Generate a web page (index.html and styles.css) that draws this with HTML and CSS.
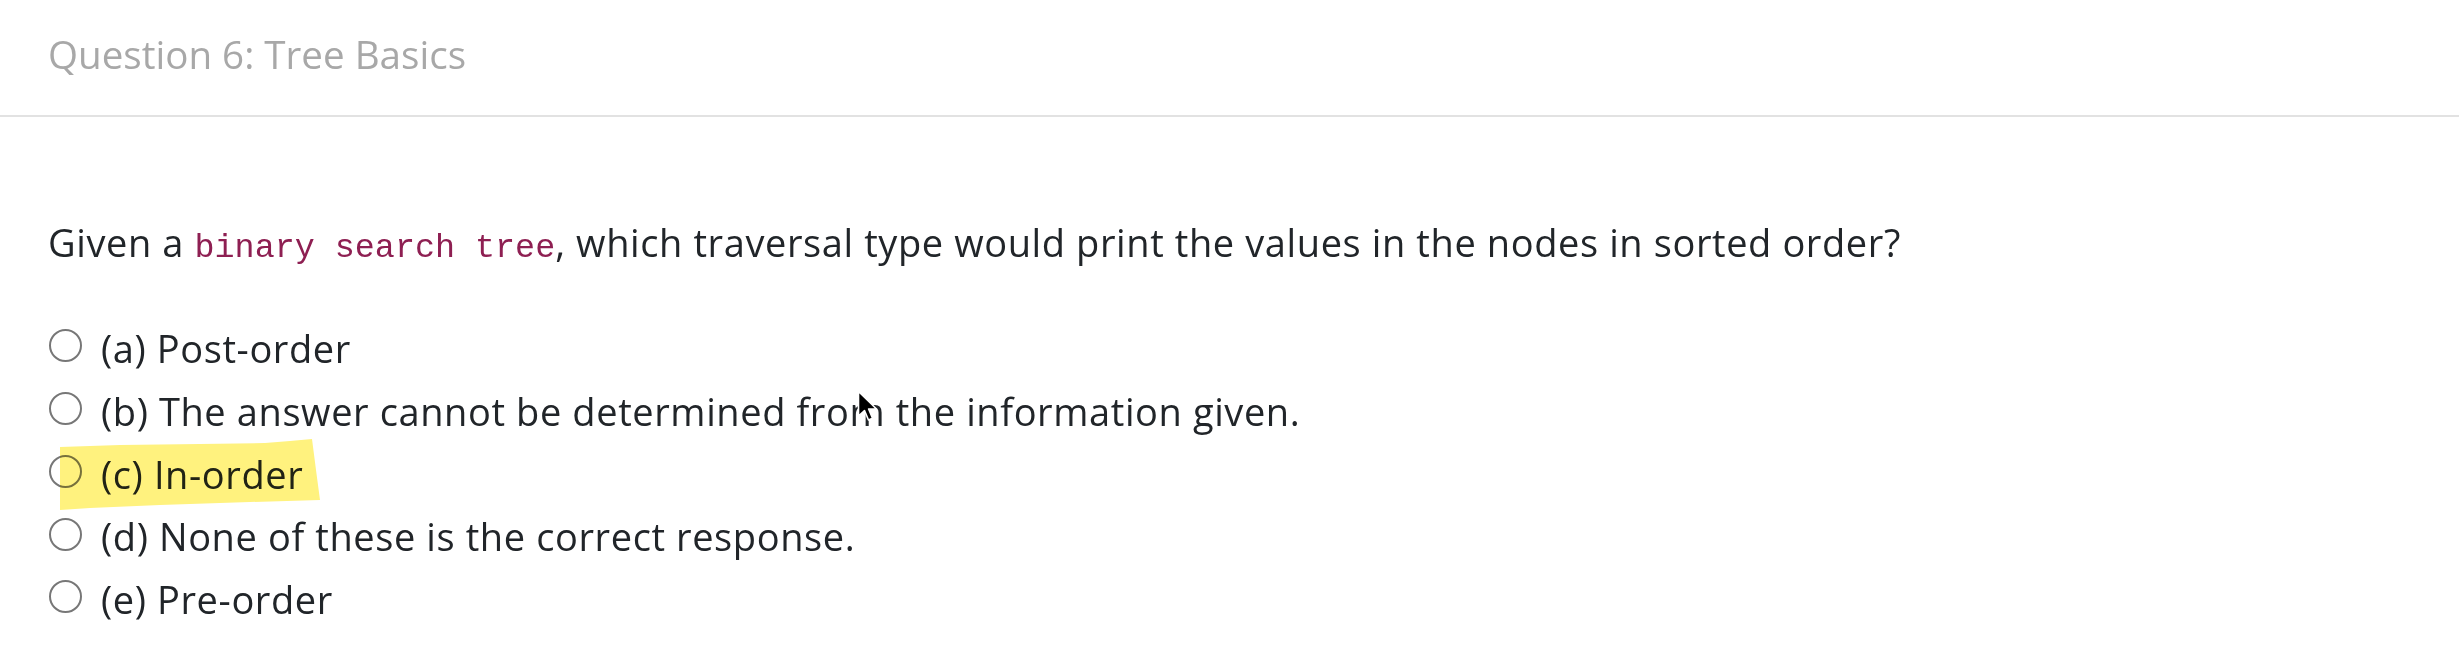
FILE: index.html
```html
<!DOCTYPE html>
<html>
<head>
<meta charset="utf-8">
<link rel="stylesheet" href="styles.css">
</head>
<body>
<div class="page">
  <div class="header">Question 6: Tree Basics</div>
  <div class="content">
    <p class="question">Given a <code>binary search tree</code>, which traversal type would print the values in the nodes in sorted order?</p>
    <div class="options">
      <label class="option"><span class="radio"></span><span class="label">(a) Post-order</span></label>
      <label class="option"><span class="radio"></span><span class="label">(b) The answer cannot be determined from the information given.</span></label>
      <label class="option"><span class="radio"></span><span class="label">(c) In-order</span></label>
      <label class="option"><span class="radio"></span><span class="label">(d) None of these is the correct response.</span></label>
      <label class="option"><span class="radio"></span><span class="label">(e) Pre-order</span></label>
    </div>
  </div>
  <svg class="highlight" width="2459" height="664" viewBox="0 0 2459 664">
    <path d="M60 447 L120 445 L200 444 L265 443 L290 441 L312 439 L316 470 L320 500 L250 502 L160 505 L90 508 L60 510 Z" fill="#fff27e"/>
  </svg>
  <svg class="cursor" width="24" height="34" viewBox="0 0 24 34">
    <path d="M1.5 1.5 L1.5 26 L7.5 20.5 L11.5 30 L15.5 28.3 L11.6 19 L19.5 19 Z" fill="#000" stroke="#fff" stroke-width="1.6" stroke-linejoin="round"/>
  </svg>
</div>
</body>
</html>
```
FILE: styles.css
```css
html, body {
  margin: 0;
  padding: 0;
  background: #fff;
}
.page {
  position: relative;
  width: 2459px;
  height: 664px;
  overflow: hidden;
  font-family: "Open Sans", "Noto Sans", sans-serif;
  color: #212529;
}
.header {
  font-size: 38.6px;
  font-weight: 400;
  line-height: 56px;
  padding: 26px 0 33px 48px;
  color: #a8a8a8;
  border-bottom: 2px solid #e2e2e2;
}
.content {
  padding: 98px 0 0 48px;
  font-size: 38px;
  letter-spacing: 0.6px;
}
.question {
  margin: 0;
  line-height: 54px;
}
code {
  font-family: "Liberation Mono", "DejaVu Sans Mono", monospace;
  font-size: 33.4px;
  letter-spacing: 0;
  color: #8e1f52;
}
.options {
  display: flex;
  flex-direction: column;
  margin-top: 42px;
}
.option {
  display: flex;
  align-items: center;
  height: 62.75px;
  line-height: 62.75px;
}
.radio {
  width: 29px;
  height: 29px;
  border: 2.6px solid #777;
  border-radius: 50%;
  margin-bottom: 5px;
  margin-right: 19px;
  margin-left: 1px;
  flex: none;
}
.highlight {
  position: absolute;
  left: 0;
  top: 0;
  mix-blend-mode: multiply;
  pointer-events: none;
}
.cursor {
  position: absolute;
  left: 857px;
  top: 390px;
}
```
